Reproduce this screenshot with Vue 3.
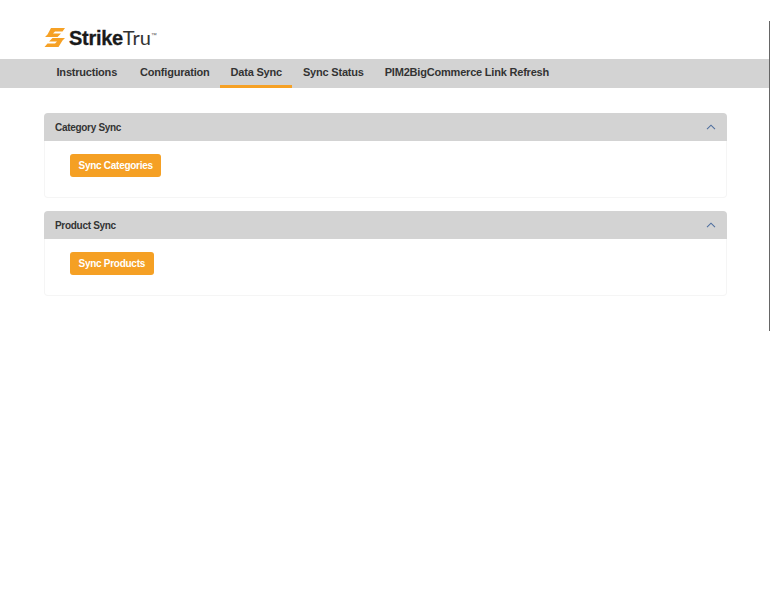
<script setup>
const tabs = [
  { label: 'Instructions', active: false },
  { label: 'Configuration', active: false },
  { label: 'Data Sync', active: true },
  { label: 'Sync Status', active: false },
  { label: 'PIM2BigCommerce Link Refresh', active: false }
]
const panels = [
  { title: 'Category Sync', action: 'Sync Categories' },
  { title: 'Product Sync', action: 'Sync Products' }
]
</script>

<template>
  <div class="page">
    <header class="brand">
      <svg class="mark" width="22" height="21" viewBox="0 0 22 21" aria-hidden="true">
        <path d="M7 1H21L18.5 4.5H11L9 6.5H17L13.5 10H1L3.5 7.5Z" fill="#f6a125" />
        <path d="M14.5 20H0.5L3.5 16.5H11L13 14.5H5L8.5 11H21L18.5 13.5Z" fill="#f6a125" />
      </svg>
      <span class="wordmark"><b>Strike</b><span class="tru">Tru</span><sup class="tm">™</sup></span>
    </header>

    <nav class="tabs">
      <a v-for="t in tabs" :key="t.label" class="tab" :class="{ active: t.active }">{{ t.label }}</a>
    </nav>

    <main class="content">
      <section v-for="p in panels" :key="p.title" class="panel">
        <div class="panel-head">
          <span>{{ p.title }}</span>
          <svg width="10" height="6" viewBox="0 0 10 6" aria-hidden="true">
            <path d="M1 5.2L5 1.2L9 5.2" fill="none" stroke="#4f6f9f" stroke-width="1.1" />
          </svg>
        </div>
        <div class="panel-body">
          <button class="btn" type="button">{{ p.action }}</button>
        </div>
      </section>
    </main>
    <div class="edge"></div>
  </div>
</template>

<style>
html, body { margin: 0; background: #fff; }
</style>

<style scoped>
.page {
  position: relative;
  width: 770px;
  height: 600px;
  overflow: hidden;
  font-family: "Liberation Sans", Arial, sans-serif;
  color: #2b2b2b;
}
.brand {
  height: 59px;
  box-sizing: border-box;
  padding: 27px 0 0 44px;
  display: flex;
  align-items: flex-start;
  gap: 3px;
}
.mark { display: block; flex: none; }
.wordmark {
  font-size: 20px;
  line-height: 20px;
  color: #1a1a1a;
  letter-spacing: -0.3px;
  white-space: nowrap;
}
.wordmark b { font-weight: 700; -webkit-text-stroke: 0.3px #1a1a1a; }
.tru { font-weight: 400; font-family: "Lato", "Liberation Sans", sans-serif; letter-spacing: 0; color: #333; }
.tm { font-size: 6px; line-height: 0; vertical-align: 8px; margin-left: 0; color: #555; }
.tabs {
  width: 769px;
  height: 29px;
  background: #d3d3d3;
  display: flex;
  padding-left: 46px;
  box-sizing: border-box;
}
.tab {
  box-sizing: border-box;
  height: 29px;
  padding: 0 10.5px;
  font-size: 11px;
  letter-spacing: -0.2px;
  font-weight: 700;
  line-height: 27px;
  color: #333;
  white-space: nowrap;
  border-bottom: 3px solid transparent;
}
.tab:first-child { margin-right: 2px; }
.tab.active { border-bottom-color: #f6a125; }
.content {
  width: 683px;
  margin: 25px 0 0 44px;
  display: flex;
  flex-direction: column;
  gap: 13px;
}
.panel {
  border-radius: 4px;
}
.panel-head {
  height: 28px;
  background: #d3d3d3;
  border-radius: 4px 4px 0 0;
  display: flex;
  align-items: center;
  justify-content: space-between;
  padding: 0 11px;
  font-size: 10px;
  letter-spacing: -0.3px;
  font-weight: 700;
  color: #333;
}
.panel-body {
  height: 57px;
  box-sizing: border-box;
  border: 1px solid #f5f5f5;
  border-top: 0;
  border-radius: 0 0 4px 4px;
  padding: 13px 25px;
}
.btn {
  display: block;
  height: 23px;
  padding: 0 8.5px;
  background: #f5a024;
  border: 0;
  border-radius: 3px;
  color: #fff;
  font-family: inherit;
  font-size: 10px;
  letter-spacing: -0.27px;
  font-weight: 700;
}
.edge {
  position: absolute;
  left: 769px;
  top: 21px;
  width: 1px;
  height: 310px;
  background: #666;
}
</style>
